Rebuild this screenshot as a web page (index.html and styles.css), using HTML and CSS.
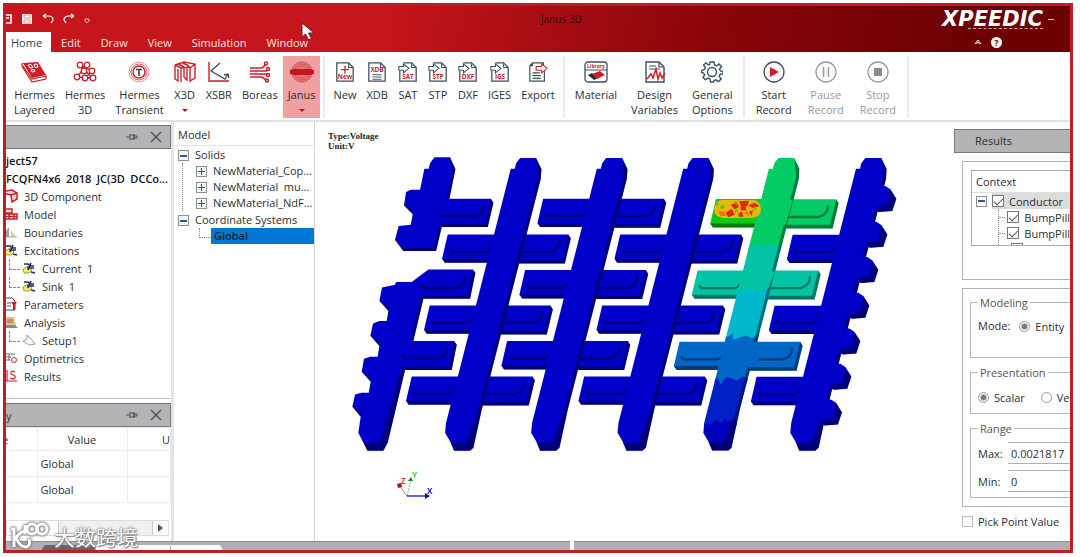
FILE: index.html
```html
<!DOCTYPE html>
<html lang="en">
<head>
    <meta charset="utf-8">
    <meta name="viewport" content="width=device-width, initial-scale=1.0">
    <title>Janus 3D</title>
    <link rel="stylesheet" href="styles.css">
</head>
<body>
    <!-- shared shapes -->
    <svg class="defs" width="0" height="0" aria-hidden="true">
        <defs>
            <symbol id="file" viewBox="0 0 22 22">
                <path d="M2 1h13l5 5v15H2z" fill="#fff" stroke="#3c4f5e" stroke-width="1.4"/>
                <path d="M15 1v5h5" fill="none" stroke="#3c4f5e" stroke-width="1.2"/>
            </symbol>
            <symbol id="import" viewBox="0 0 22 22">
                <path d="M6 1h9l5 5v15H2V10" fill="#fff" stroke="#3c4f5e" stroke-width="1.4"/>
                <path d="M15 1v5h5" fill="none" stroke="#3c4f5e" stroke-width="1.2"/>
                <path d="M1 5h5V2l6 5-6 5V9H1z" fill="#fff" stroke="#3c4f5e" stroke-width="1.2"/>
            </symbol>
            <symbol id="pin" viewBox="0 0 12 8">
                <path d="M0 4h4M4 1v6M4 2h4v4H4M8 1v6M8 3h3v2H8" fill="none" stroke="#45525c"/>
            </symbol>
            <symbol id="close" viewBox="0 0 12 12">
                <path d="M1 1l10 10M11 1L1 11" stroke="#45525c" stroke-width="1.4"/>
            </symbol>
            <symbol id="source" viewBox="0 0 14 12">
                <path d="M1 7l5-3 4 4-3 3H2z" fill="#f3ea6a" stroke="#77722c" stroke-width=".7"/>
                <path d="M2 2h4l2 2h4M5 6h7M9 1L6 8M9 10l4 1" fill="none" stroke="#222b6e" stroke-width="1.6"/>
            </symbol>

            <!-- one spine of the lead frame -->
            <g id="spine">
                <path d="M540 36H588L604 70L602 98L425 790L400 905L390 914H342L330 885L315 860L318 830L512 68H524L528 52Z"/>
                <path class="shade" d="M588 36L604 70L602 98L425 790L400 905L390 914H342L332 890H378L390 860L415 790L594 90Z"/>
            </g>
            <g id="finger-left">
                <path d="M323 265H480L456 350H314L306 338Z"/>
                <path class="shade" d="M306 338H458L456 350H314Z"/>
                <path class="groove" d="M328 310L334 318H436Q460 310 459 283"/>
            </g>
            <g id="finger-right">
                <path d="M520 265H685L692 277L674 352H510Z"/>
                <path class="shade" d="M685 265L692 277L674 352H518L522 341H666Z"/>
                <path class="groove" d="M528 308L538 318H632Q662 310 660 283"/>
            </g>
            <g id="bump">
                <path d="M1596 120H1635L1650 130L1668 158L1656 195L1616 198L1580 182Z"/>
                <path class="shade" d="M1650 130L1668 158L1656 195L1616 198L1602 184L1642 176Z"/>
            </g>
            <clipPath id="hot-spine">
                <path d="M1314 36H1362L1378 70L1376 98L1199 790L1174 905L1164 914H1116L1104 885L1089 860L1092 830L1286 68H1298L1302 52Z"/>
            </clipPath>
        </defs>
    </svg>

    <div class="app">
        <header class="titlebar">
            <div class="title-row">
                <div class="quick-access">
                    <svg width="6" height="10" viewBox="0 0 6 10"><path d="M0 1h5v8H0M0 4h3" fill="none" stroke="#fff" stroke-width="1.6"/></svg>
                    <svg width="12" height="12" viewBox="0 0 12 12"><path d="M1 1h9l1 1v9H1z" fill="#fff"/><path d="M3 2h6v3H3zM3 7h6v3H3z" fill="none" stroke="#e58a8d"/></svg>
                    <svg width="12" height="12" viewBox="0 0 12 12"><path d="M1 3l3-2M1 3l3 2M1 3h5q5 0 5 4l-2 3" fill="none" stroke="#fff" stroke-width="1.2"/></svg>
                    <svg width="12" height="12" viewBox="0 0 12 12"><path d="M11 3L8 1M11 3L8 5M11 3H6Q1 3 1 7l2 3" fill="none" stroke="#fff" stroke-width="1.2"/></svg>
                    <svg class="qa-more" width="6" height="6" viewBox="0 0 6 6"><path d="M1 1h4v2L3 5 1 3z" fill="none" stroke="#eebbbd"/></svg>
                </div>
                <span class="app-title">Janus 3D</span>
                <div class="brand">
                    <div class="brand-name">XPEEDIC</div>
                    <div class="brand-line"></div>
                </div>
                <span class="minimize"></span>
            </div>
            <div class="tab-row">
                <nav class="tabs">
                    <button class="tab active">Home</button>
                    <button class="tab">Edit</button>
                    <button class="tab">Draw</button>
                    <button class="tab">View</button>
                    <button class="tab">Simulation</button>
                    <button class="tab">Window</button>
                </nav>
                <div class="help">
                    <svg width="8" height="8" viewBox="0 0 8 8"><path d="M1 6l3-4 3 4M2.500 6L4 4l1.500 2" fill="none" stroke="#fff"/></svg>
                    <span class="help-badge">?</span>
                </div>
            </div>
        </header>

        <div class="ribbon">
            <div class="group">
                <button class="tool">
                    <svg width="26" height="22" viewBox="0 0 26 22"><path d="M2 2l15-1 8 13-14 3z" fill="#cb2027"/><path d="M2 2q-2 2 0 5l9 14 14-3v-4M2 5l9 13 14-3" fill="none" stroke="#cb2027" stroke-width="1.200"/><path d="M7 4l3-.5 2 3-3 .5zM13 3.500l3-.5 1 3-3 .5zM10 9l3-.5 1 2-3 .5z" fill="none" stroke="#fff"/></svg>
                    <span>Hermes<br>Layered</span>
                </button>
                <button class="tool">
                    <svg width="24" height="22" viewBox="0 0 24 22"><g fill="#fff" stroke="#cb2027" stroke-width="1.300"><path d="M7 4l12 6M4 16L14 4M4 16l17 1M8 5l11 12M12 17l7-7"/><circle cx="7" cy="4" r="2.800"/><circle cx="14" cy="4" r="2.800"/><circle cx="19" cy="10" r="2.800"/><circle cx="11" cy="10" r="2.800"/><circle cx="4" cy="16" r="2.800"/><circle cx="12" cy="17" r="2.800"/><circle cx="20" cy="17" r="2.800"/></g></svg>
                    <span>Hermes<br>3D</span>
                </button>
                <button class="tool">
                    <svg width="22" height="22" viewBox="0 0 22 22"><g fill="none" stroke="#cb2027"><circle cx="11" cy="11" r="10" stroke-opacity=".5"/><circle cx="11" cy="11" r="8" stroke-opacity=".7"/><circle cx="11" cy="11" r="6" stroke-width="1.500"/></g><path d="M8 8.500h6M11 8.500V15" stroke="#2c3e4c" stroke-width="1.600"/></svg>
                    <span>Hermes<br>Transient</span>
                </button>
                <button class="tool">
                    <svg width="22" height="22" viewBox="0 0 22 22"><g fill="none" stroke="#cb2027" stroke-width="1.400"><path d="M1 4l9-3 11 2v14l-5 3V7l5-4M1 4l6 3 9-1M1 4v14l3 2V8M7 7v14M10 7v9l3 3V7M4 3l6 3M9 2l6 3"/></g></svg>
                    <span>X3D</span>
                    <i class="drop"></i>
                </button>
                <button class="tool">
                    <svg width="22" height="22" viewBox="0 0 22 22"><path d="M1 1v19h20" fill="none" stroke="#cb2027" stroke-width="1.400"/><path d="M12 2L3 10l14 8 3-5M16 14l4-1 1 4" fill="none" stroke="#3c4f5e" stroke-width="1.300"/></svg>
                    <span>XSBR</span>
                </button>
                <button class="tool">
                    <svg width="22" height="22" viewBox="0 0 22 22"><g fill="none" stroke="#cb2027" stroke-width="1.500"><path d="M1 7h11q3 0 4-4M1 10h17M1 13h17M1 16h10q4 0 6 4"/><circle cx="17" cy="2.500" r="1.500"/><circle cx="19" cy="8" r="1.500"/><circle cx="19" cy="14" r="1.500"/><circle cx="18" cy="19.500" r="1.500"/></g></svg>
                    <span>Boreas</span>
                </button>
                <button class="tool selected">
                    <svg width="24" height="22" viewBox="0 0 24 22"><circle cx="12" cy="11" r="10.500" fill="#e5787b"/><g fill="none" stroke="#cb4b50" stroke-width=".8"><circle cx="12" cy="11" r="10"/><circle cx="12" cy="11" r="8"/><circle cx="12" cy="11" r="6"/></g><path d="M0 9l4-1h16l4 1v4l-4 1H4l-4-1z" fill="#c4161c"/></svg>
                    <span>Janus</span>
                    <i class="drop"></i>
                </button>
            </div>
            <div class="group">
                <button class="tool">
                    <svg width="20" height="22" viewBox="0 0 22 22"><use href="#file"/><path d="M11 4v9M6.500 8.500h9" stroke="#cb2027" stroke-width="1.400"/><text x="11" y="19" class="tag">New</text></svg>
                    <span>New</span>
                </button>
                <button class="tool">
                    <svg width="20" height="22" viewBox="0 0 22 22"><use href="#file"/><text x="11" y="11" class="tag">XDB</text><path d="M6 14h10M6 16.500h10M6 19h10" stroke="#3c4f5e"/></svg>
                    <span>XDB</span>
                </button>
                <button class="tool">
                    <svg width="20" height="22" viewBox="0 0 22 22"><use href="#import"/><text x="11" y="19" class="tag">SAT</text></svg>
                    <span>SAT</span>
                </button>
                <button class="tool">
                    <svg width="20" height="22" viewBox="0 0 22 22"><use href="#import"/><text x="11" y="19" class="tag">STP</text></svg>
                    <span>STP</span>
                </button>
                <button class="tool">
                    <svg width="20" height="22" viewBox="0 0 22 22"><use href="#import"/><text x="11" y="19" class="tag">DXF</text></svg>
                    <span>DXF</span>
                </button>
                <button class="tool">
                    <svg width="20" height="22" viewBox="0 0 22 22"><use href="#import"/><text x="11" y="19" class="tag">IGS</text></svg>
                    <span>IGES</span>
                </button>
                <button class="tool">
                    <svg width="20" height="22" viewBox="0 0 22 22"><path d="M18 10v11H2V4l3-3h12v3M5 1v3H2M5 12h8M5 15h9M5 18h9" fill="none" stroke="#3c4f5e" stroke-width="1.300"/><path d="M9 5h6V2l6 5-6 5V9H9z" fill="#fff" stroke="#cb2027" stroke-width="1.200"/></svg>
                    <span>Export</span>
                </button>
            </div>
            <div class="group wide">
                <button class="tool">
                    <svg width="24" height="22" viewBox="0 0 24 22"><rect x="1" y="1" width="22" height="20" rx="3" fill="#fff" stroke="#3c4f5e" stroke-width="1.300"/><text x="12" y="7" class="tag small">Library</text><path d="M1 9h22" stroke="#3c4f5e"/><path d="M4 14l4-2 6 5-4 2z" fill="#1d2b38"/><path d="M8 13l8-3 5 4-8 4z" fill="#cb2027"/></svg>
                    <span>Material</span>
                </button>
                <button class="tool">
                    <svg width="22" height="22" viewBox="0 0 22 22"><use href="#file"/><path d="M5 5h7M5 8h11" stroke="#3c4f5e"/><path d="M3 18l4-5 2 4 3-9 2 10 2-6 2 5 3-5" fill="none" stroke="#cb2027" stroke-width="1.500"/></svg>
                    <span>Design<br>Variables</span>
                </button>
                <button class="tool">
                    <svg width="22" height="22" viewBox="0 0 22 22"><path d="M9 1h4l.5 3 2 1 2.500-2 2.500 2.500-2 2.500 1 2 2.500.5v2l-3 1-.8 2 2 2.500-2.600 2.600-2.600-1.800-2 .8L12.500 21h-3L9 18l-2-1-2.500 1.800L2 16.500 3.600 14l-1-2L.5 11.500v-2l3-1 1-2L2.500 4 5 2l2.500 2 1.200-.5z" fill="none" stroke="#3c4f5e" stroke-width="1.400"/><circle cx="11" cy="11" r="4.500" fill="none" stroke="#3c4f5e" stroke-width="1.400"/></svg>
                    <span>General<br>Options</span>
                </button>
            </div>
            <div class="group record">
                <button class="tool">
                    <svg width="22" height="22" viewBox="0 0 22 22"><circle cx="11" cy="11" r="10" fill="none" stroke="#3c4f5e" stroke-width="1.300"/><path d="M7 6l9 5-9 5z" fill="#cb2027"/></svg>
                    <span>Start<br>Record</span>
                </button>
                <button class="tool" disabled>
                    <svg width="22" height="22" viewBox="0 0 22 22"><circle cx="11" cy="11" r="10" fill="none" stroke="#999" stroke-width="1.300"/><path d="M8.500 6v10M13.500 6v10" stroke="#999" stroke-width="1.500"/></svg>
                    <span>Pause<br>Record</span>
                </button>
                <button class="tool" disabled>
                    <svg width="22" height="22" viewBox="0 0 22 22"><circle cx="11" cy="11" r="10" fill="none" stroke="#999" stroke-width="1.300"/><path d="M7 7h8v8H7z" fill="#8d8d8d"/></svg>
                    <span>Stop<br>Record</span>
                </button>
            </div>
        </div>

        <main class="workspace">
            <div class="left">
                <section class="project">
                    <div class="panel-title">
                        <svg width="12" height="8"><use href="#pin"/></svg>
                        <svg width="12" height="12"><use href="#close"/></svg>
                    </div>
                    <ul class="project-tree">
                        <li class="bold">ject57</li>
                        <li class="bold">FCQFN4x6&ensp;2018&ensp;JC(3D&ensp;DCCo...</li>
                        <li><svg width="12" height="14" viewBox="0 0 12 14"><path d="M0 2l6-1 5 3v6l-5 3-1-7-5-1M5 6l6-2" fill="#f6d5d6" stroke="#cb2027" stroke-width="1.500"/></svg>3D Component</li>
                        <li><svg width="12" height="14" viewBox="0 0 12 14"><path d="M0 2h6v4H0M0 7h11v5H0M3 7v5M8 7v5M0 9.500h11" fill="none" stroke="#cb2027" stroke-width="1.500"/></svg>Model</li>
                        <li><svg width="12" height="14" viewBox="0 0 12 14"><path d="M0 12V6l3-4v10z" fill="#8ba5b8"/><path d="M5 12V5l5 7z" fill="#e6c98a"/><path d="M0 12h11" stroke="#9aa"/></svg>Boundaries</li>
                        <li><svg width="12" height="12" viewBox="2 0 12 12"><use href="#source" width="14" height="12"/></svg>Excitations</li>
                        <li class="branch"><svg width="14" height="12"><use href="#source"/></svg>Current&ensp;1</li>
                        <li class="branch"><svg width="14" height="12"><use href="#source"/></svg>Sink&ensp;1</li>
                        <li><svg width="12" height="14" viewBox="0 0 12 14"><path d="M0 1h6l3 3v9H0M1 6h4M1 9h4" fill="none" stroke="#3c4f5e"/><path d="M5 5h6l-2 3v5H7V8z" fill="#cb2027"/></svg>Parameters</li>
                        <li><svg width="12" height="14" viewBox="0 0 12 14"><path d="M0 2h8l2 8H0z" fill="#e9bf7c"/><path d="M1 5h6M1 7h6" stroke="#7a6a50"/><path d="M0 10h9l3 3H0z" fill="#6f8fa8"/></svg>Analysis</li>
                        <li class="branch"><svg width="14" height="12" viewBox="0 0 14 12"><path d="M1 7l4-2V1l5 5 3 4-6 1z" fill="#fafafa" stroke="#999"/></svg>Setup1</li>
                        <li><svg width="12" height="14" viewBox="0 0 12 14"><path d="M0 3h9M0 6h5M0 9h4M3 3v6" stroke="#5d6b76"/><circle cx="8" cy="9" r="2.500" fill="none" stroke="#cb2027"/></svg>Optimetrics</li>
                        <li><svg width="12" height="14" viewBox="0 0 12 14"><path d="M1 1v11M0 12h11M9 3L7 2 5 3v2l4 2v2L7 10 4 9" fill="none" stroke="#cb2027" stroke-width="1.200"/></svg>Results</li>
                    </ul>
                </section>
                <section class="property">
                    <div class="panel-title">
                        <span class="name">y</span>
                        <svg width="12" height="8"><use href="#pin"/></svg>
                        <svg width="12" height="12"><use href="#close"/></svg>
                    </div>
                    <table>
                        <tr><th>e</th><th>Value</th><th>U</th></tr>
                        <tr><td></td><td>Global</td><td></td></tr>
                        <tr><td></td><td>Global</td><td></td></tr>
                    </table>
                    <div class="hscroll">
                        <span class="thumb"></span>
                        <button aria-label="Scroll right"><svg width="5" height="8" viewBox="0 0 5 8"><path d="M0 0l5 4-5 4z" fill="#555"/></svg></button>
                    </div>
                </section>
            </div>

            <section class="model-tree">
                <h2>Model</h2>
                <ul>
                    <li><i class="box minus"></i>Solids
                        <ul class="solids">
                            <li><i class="box plus"></i>NewMaterial_Cop...</li>
                            <li><i class="box plus"></i>NewMaterial&ensp;mu...</li>
                            <li><i class="box plus"></i>NewMaterial_NdF...</li>
                        </ul>
                    </li>
                    <li><i class="box minus"></i>Coordinate Systems
                        <ul class="coords">
                            <li><span class="picked">Global</span></li>
                        </ul>
                    </li>
                </ul>
            </section>

            <section class="viewport">
                <p class="legend">Type:Voltage<br>Unit:V</p>
                <svg class="part" viewBox="0 0 1700 930" fill="#0000c8">
                    <!-- left edge bar, upper and lower pieces -->
                    <path d="M283 34H330L346 70L328 158H452L460 170L443 243H305L288 315H190L165 280L176 240L212 236L218 205L192 178L198 138L212 131H240L253 68H266L270 52Z"/>
                    <path class="shade" d="M330 34L346 70L328 158H319L338 80ZM452 158L460 170L443 243H305L288 315H190L182 306H280L298 234H436ZM192 170L220 196L218 205L192 180ZM165 278L190 306V315L165 284Z"/>
                    <path class="groove" d="M297 202L305 210H405Q433 202 431 176"/>
                    <path d="M265 370H398L406 380L390 458H250L220 585H342L350 596L335 672H195L143 890L130 914H82L55 860L62 812L37 782L45 745L64 740H86L92 707L65 677L72 638L90 632H113L118 600L91 569L99 532L118 525H140L145 495L118 464L126 424L165 416L168 408H215Z"/>
                    <path class="shade" d="M398 370L406 380L390 458H250L220 585H211L242 448H382ZM342 585L350 596L335 672H195L143 890L130 914H82L72 890H120L186 662H328ZM118 462L148 486L145 495ZM91 567L121 591L118 600ZM65 675L95 698L92 707ZM37 780L65 803L62 812Z"/>
                    <path class="groove" d="M241 417L249 425H350Q378 417 376 390M188 630L196 638H295Q323 630 321 603"/>

                    <!-- six rows of fingers, then the spines they hang on -->
                    <use href="#finger-left"/>
                    <use href="#finger-left" x="-54" y="213"/>
                    <use href="#finger-left" x="-108" y="426"/>
                    <use href="#finger-right"/>
                    <use href="#finger-right" x="-54" y="213"/>
                    <use href="#finger-right" x="-108" y="426"/>
                    <use href="#spine"/>

                    <use href="#finger-left" x="286" y="-107"/>
                    <use href="#finger-left" x="232" y="107"/>
                    <use href="#finger-left" x="178" y="320"/>
                    <use href="#finger-right" x="286" y="-107"/>
                    <use href="#finger-right" x="232" y="107"/>
                    <use href="#finger-right" x="178" y="320"/>
                    <use href="#spine" x="258"/>

                    <use href="#finger-left" x="517"/>
                    <use href="#finger-left" x="463" y="213"/>
                    <use href="#finger-left" x="409" y="426"/>
                    <use href="#finger-right" x="517"/>
                    <use href="#finger-right" x="463" y="213"/>
                    <use href="#finger-right" x="409" y="426"/>
                    <use href="#spine" x="517"/>

                    <!-- spine carrying the voltage -->
                    <use href="#finger-left" x="804" y="-106" fill="#10c818"/>
                    <use href="#finger-right" x="803" y="-105" fill="#04cc64"/>
                    <use href="#finger-left" x="749" y="108" fill="#00c4a4"/>
                    <use href="#finger-right" x="749" y="108" fill="#00c4a4"/>
                    <use href="#finger-left" x="695" y="322" fill="#0066c8"/>
                    <use href="#finger-right" x="695" y="322" fill="#0066c8"/>
                    <g clip-path="url(#hot-spine)">
                        <path fill="#04cc64" d="M1080 30H1400V320H1080Z"/>
                        <path fill="#00c4a4" d="M1080 300H1236L1256 290L1270 302L1288 292L1308 300H1400V450H1080Z"/>
                        <path fill="#00b8cc" d="M1080 440L1200 438L1220 430L1256 434L1285 428H1400V600H1080Z"/>
                        <path fill="#0066c8" d="M1080 570L1164 572L1180 560L1178 582L1216 568L1234 576L1262 560L1280 572H1400V710H1080Z"/>
                        <path fill="#0022c4" d="M1080 706L1132 696L1142 712L1160 692L1190 702L1208 690L1226 700H1400V840H1080Z"/>
                        <path fill="#0000bc" d="M1080 830L1110 836L1128 820L1142 832L1160 812L1158 826L1182 820L1190 832H1400V930H1080Z"/>
                        <path class="shade" d="M1362 36L1378 70L1376 98L1199 790L1174 905L1164 914H1116L1106 890H1152L1164 860L1189 790L1368 90Z"/>
                    </g>
                    <path fill="#0066c8" d="M1215 588H1270L1248 662H1205Z"/>
                    <path fill="#04cc64" d="M1260 162H1358L1336 236H1250Z"/>
                    <path fill="#00c4a4" d="M1250 376H1304L1284 428H1240Z"/>
                    <g>
                        <rect x="1122" y="162" width="140" height="54" rx="25" fill="#e4b80c"/>
                        <path fill="#dd2a0c" d="M1172 176l18-6 6 14-14 6zM1196 166l30-2-4 16-18 4zM1200 184l16-4 2 14-16-2zM1224 178l20-8 14 10-20 6zM1156 200l18-12 10 18-20 8zM1194 204l10-8 6 16h-14zM1226 198l12-6-4 18z"/>
                        <path fill="#e8731a" d="M1134 194l20 4 4 12-18 0zM1180 168l12-2-2 10zM1210 202l12-6 6 14z"/>
                        <path fill="#5cc41c" d="M1138 182l12-6 6 8-12 6zM1122 176l14-8-4 12zM1182 192l8-4 4 8-8 4zM1236 188l14-2-4 8z"/>
                    </g>

                    <!-- right edge bar -->
                    <use href="#finger-left" x="1034" y="1"/>
                    <use href="#finger-left" x="980" y="214"/>
                    <use href="#finger-left" x="926" y="427"/>
                    <use href="#spine" x="1035"/>
                    <use href="#bump"/>
                    <use href="#bump" x="-27" y="107"/>
                    <use href="#bump" x="-54" y="213"/>
                    <use href="#bump" x="-81" y="320"/>
                    <use href="#bump" x="-108" y="427"/>
                    <use href="#bump" x="-135" y="533"/>
                    <use href="#bump" x="-163" y="640"/>
                </svg>
                <svg class="axes" width="40" height="28" viewBox="0 0 40 28">
                    <path d="M12 25L4 14" stroke="#f08080"/>
                    <path d="M12 25L16 9" stroke="#50d050" stroke-dasharray="2 1"/>
                    <path d="M12 25H32" stroke="#3030d0" stroke-width="1.500"/>
                    <path d="M2 13l4-1 1 4-4 1z" fill="#b01010"/>
                    <path d="M13 10l3-4 2 4z" fill="#108020"/>
                    <path d="M30 22l5 3-5 3z" fill="#1010a0"/>
                    <text x="6" y="13" fill="#e04040">Z</text>
                    <text x="17" y="7" fill="#30d030">Y</text>
                    <text x="32" y="23" fill="#2020d0">X</text>
                </svg>
            </section>

            <section class="results">
                <h2>Results</h2>
                <div class="context-box">
                    <div class="context">
                        <div class="context-head">Context</div>
                        <div class="node"><i class="box minus"></i><label class="on"><input type="checkbox" checked>Conductor</label></div>
                        <div class="kids">
                            <label><input type="checkbox" checked>BumpPill</label>
                            <label><input type="checkbox" checked>BumpPill</label>
                            <label><input type="checkbox"></label>
                        </div>
                    </div>
                </div>
                <div class="settings">
                    <fieldset class="modeling">
                        <legend>Modeling</legend>
                        <div class="line"><span>Mode:</span><label><input type="radio" name="mode" checked>Entity</label></div>
                    </fieldset>
                    <fieldset class="presentation">
                        <legend>Presentation</legend>
                        <div class="line"><label><input type="radio" name="kind" checked>Scalar</label><label><input type="radio" name="kind">Vec</label></div>
                    </fieldset>
                    <fieldset class="range">
                        <legend>Range</legend>
                        <div class="field"><label for="max">Max:</label><input id="max" type="text" value="0.0021817"></div>
                        <div class="field"><label for="min">Min:</label><input id="min" type="text" value="0"></div>
                    </fieldset>
                </div>
                <label class="pick"><input type="checkbox">Pick Point Value</label>
            </section>
        </main>

        <footer class="docks">
            <div class="dock"><span class="dock-tab dark"></span><span class="dock-tab"></span><span class="dock-tab end"></span></div>
            <div class="dock"></div>
        </footer>

        <svg class="cursor" width="14" height="20" viewBox="0 0 14 20"><path d="M1 1v14l3.500-3 3 6 3-1.500-3-5.500H13z" fill="#fff" stroke="#6b1a1c"/></svg>
        <div class="watermark">
            <svg width="42" height="28" viewBox="0 0 42 28"><g id="mark" fill="none"><path d="M3 7h3v18M20 8q-8 1-12 8 4 9 10 9 5-1 3-8"/><path d="M17 3v9"/><circle cx="24" cy="7" r="5"/><circle cx="34" cy="7" r="5"/></g></svg>
            <span lang="zh">大数跨境</span>
        </div>
    </div>
</body>
</html>
```

FILE: styles.css
```css
* {
    box-sizing: border-box;
}

body {
    margin: 0;
    padding: 3px 7px 4px 3px;
    height: 100vh;
    background: #fff;
    color: #2b2f33;
    font-family: "Open Sans", "Noto Sans", sans-serif;
    font-size: 11px;
    line-height: 15px;
}

ul {
    list-style: none;
    margin: 0;
    padding: 0;
}

h2 {
    margin: 0;
    font-size: 11px;
    font-weight: normal;
}

button {
    border: 0;
    background: none;
    font: inherit;
    color: inherit;
}

svg {
    display: block;
    flex: none;
}

.defs {
    position: absolute;
}

.app {
    position: relative;
    display: flex;
    flex-direction: column;
    height: 100%;
    border: 3px solid #be1e23;
    overflow: hidden;
}

/* title bar */
.titlebar {
    flex: none;
    background: linear-gradient(100deg, #c6151c 35%, #8a0509 66%, #6c0003 90%);
    color: #fff;
}

.title-row {
    display: flex;
    align-items: center;
    height: 26px;
    padding-right: 16px;
}

.quick-access {
    display: flex;
    align-items: center;
    gap: 9px;
    flex: 4;
}

.qa-more {
    margin-top: 4px;
}

.app-title {
    flex: 3;
    color: #3a0507;
    font-size: 10px;
}

.brand-name {
    font-family: "DejaVu Sans", sans-serif;
    font-size: 21px;
    font-weight: bold;
    font-style: italic;
    line-height: 18px;
}

.brand-line {
    margin-left: 26px;
    border-top: 1px dashed #d9a0a2;
}

.minimize {
    width: 6px;
    margin-left: 5px;
    border-top: 1px solid #ddd;
}

.tab-row {
    display: flex;
    justify-content: space-between;
    height: 20px;
    padding-right: 68px;
}

.tabs {
    display: flex;
}

.tab {
    padding: 0 10px;
    color: #fbe9e9;
}

.tab.active {
    padding: 0 9px 0 5px;
    background: #fff;
    color: #2c3e50;
}

.help {
    display: flex;
    align-items: center;
    gap: 9px;
}

.help-badge {
    width: 11px;
    height: 11px;
    border-radius: 50%;
    background: #fff;
    color: #6c0003;
    font-size: 9px;
    font-weight: bold;
    line-height: 11px;
    text-align: center;
}

/* ribbon */
.ribbon {
    display: flex;
    flex: none;
    height: 70px;
    padding: 4px 0 2px;
    border-bottom: 2px solid #e2e2e2;
}

.group {
    display: flex;
    padding: 0 3px;
    border-right: 2px solid #ebebeb;
}

.tool {
    display: flex;
    flex-direction: column;
    align-items: center;
    padding: 5px 5px 0;
}

.tool span {
    margin-top: 4px;
}

.tool:disabled {
    color: #999;
}

.tool.selected {
    background: #f0a0a2;
}

.wide .tool {
    padding: 5px 7px 0;
}

.record .tool {
    padding: 5px 8px 0;
}

.drop {
    margin-top: 7px;
    border: 3px solid transparent;
    border-top-color: #b3161b;
    border-bottom: 0;
}

.tag {
    fill: #cb2027;
    font-size: 7px;
    font-weight: bold;
    text-anchor: middle;
}

.tag.small {
    font-size: 5px;
}

/* workspace */
.workspace {
    display: flex;
    flex: 1;
    min-height: 0;
}

.left {
    display: flex;
    flex-direction: column;
    flex: none;
    width: 168px;
    padding-top: 3px;
    border-right: 3px solid #e4e4e6;
}

.panel-title {
    display: flex;
    align-items: center;
    justify-content: flex-end;
    gap: 12px;
    height: 24px;
    padding-right: 8px;
    border: 1px solid #77777a;
    border-left: 0;
    background: #b4b4b6;
}

.panel-title .name {
    flex: 1;
    color: #2c3e50;
}

.project {
    height: 274px;
    border-bottom: 1px solid #c4c4c6;
}

.project-tree {
    padding-top: 2px;
}

.project-tree li {
    display: flex;
    align-items: center;
    gap: 6px;
    height: 18px;
    white-space: nowrap;
}

.project-tree .bold {
    font-weight: 600;
    color: #111;
}

.project-tree .branch {
    position: relative;
    padding-left: 16px;
}

.branch::before {
    content: "";
    position: absolute;
    left: 3px;
    top: 0;
    width: 10px;
    height: 10px;
    border-left: 1px dashed #888;
    border-bottom: 1px dashed #888;
}

.property {
    display: flex;
    flex-direction: column;
    flex: 1;
    margin-top: 4px;
}

.property table {
    width: 100%;
    table-layout: fixed;
    border-collapse: collapse;
}

.property tr {
    height: 26px;
}

.property tr:first-child {
    height: 23px;
}

.property th,
.property td {
    padding: 0 3px;
    border: 1px solid #ececee;
    border-left: 0;
    font-weight: normal;
    text-align: left;
}

.property th:nth-child(1) {
    width: 31px;
    padding: 0;
    text-indent: -4px;
}

.property th:nth-child(2) {
    width: 90px;
    text-align: center;
}

.property th:nth-child(3) {
    padding: 0;
    text-align: right;
}

.hscroll {
    display: flex;
    justify-content: space-between;
    height: 16px;
    margin: auto 2px 5px 0;
    border: 1px solid #ddd;
    background: #f0f0f0;
}

.thumb {
    width: 52px;
    border-right: 1px solid #ccc;
    background: #fff;
}

.hscroll button {
    padding: 0 5px;
    border-left: 1px solid #ccc;
    background: #fafafa;
}

/* model tree */
.model-tree {
    flex: none;
    width: 141px;
    padding-top: 2px;
    border-right: 1px solid #d8d8d8;
    overflow: hidden;
}

.model-tree h2 {
    height: 22px;
    padding-left: 4px;
    border-bottom: 1px solid #e4e4e4;
    line-height: 22px;
}

.model-tree li {
    line-height: 17px;
    white-space: nowrap;
}

.model-tree > ul > li {
    padding-left: 4px;
}

.box {
    display: inline-block;
    flex: none;
    width: 11px;
    height: 11px;
    margin-right: 6px;
    border: 1px solid #8f8f8f;
    vertical-align: -2px;
    background: linear-gradient(#2f54a8, #2f54a8) center / 7px 2px no-repeat #f4f6fa;
}

.box.plus {
    background: linear-gradient(#2f54a8, #2f54a8) center / 7px 1px no-repeat, linear-gradient(#2f54a8, #2f54a8) center / 1px 7px no-repeat, #f4f6fa;
}

.solids {
    margin-left: 4px;
    padding-left: 13px;
    border-left: 1px dotted #888;
}

.solids li {
    line-height: 16px;
}

.coords {
    margin-left: 21px;
}

.coords li {
    display: flex;
    height: 16px;
    line-height: 16px;
}

.coords li::before {
    content: "";
    width: 11px;
    height: 9px;
    border-left: 1px dotted #888;
    border-bottom: 1px dotted #888;
}

.picked {
    flex: 1;
    padding-left: 3px;
    background: #0078d7;
    color: #101c28;
    font-weight: 600;
}

/* viewport */
.viewport {
    flex: 1;
    min-width: 0;
    padding: 9px 0 0 13px;
}

.legend {
    margin: 0;
    font: bold 9px/10px "Liberation Serif", serif;
    color: #222;
}

.part {
    width: 567px;
    max-width: 100%;
    margin: -5px 0 0 12px;
}

.shade {
    fill: #000;
    fill-opacity: .4;
}

.groove {
    fill: none;
    stroke: #000;
    stroke-opacity: .4;
    stroke-width: 7px;
}

.axes {
    margin: 15px 0 0 67px;
}

.axes text {
    font-size: 8px;
    font-weight: bold;
}

/* results */
.results {
    flex: none;
    width: 116px;
    padding-top: 7px;
    overflow: hidden;
    white-space: nowrap;
}

.results h2 {
    height: 24px;
    padding-left: 20px;
    border: 1px solid #77777a;
    border-right: 0;
    background: #b4b4b6;
    line-height: 22px;
}

.context-box,
.settings {
    margin: 8px 0 0 8px;
    padding: 8px 0 0 8px;
    border: 1px solid #b2b2b2;
    border-right: 0;
}

.context-box {
    height: 119px;
}

.context {
    height: 76px;
    border: 1px solid #a8a8a8;
    border-right: 0;
    overflow: hidden;
}

.context-head {
    padding-left: 4px;
    border-bottom: 1px solid #e0e0e0;
    line-height: 21px;
}

.node {
    display: flex;
    align-items: center;
    padding-left: 4px;
}

.node .box {
    margin-right: 5px;
}

.node .on {
    flex: 1;
    background: #dcdcdc;
}

.results label {
    display: flex;
    align-items: center;
    gap: 5px;
    height: 16px;
}

.results input[type="checkbox"],
.results input[type="radio"] {
    appearance: none;
    flex: none;
    width: 12px;
    height: 12px;
    margin: 0;
    border: 1px solid #777;
    background: #fff;
}

.results input[type="checkbox"]:checked::before {
    content: "";
    display: block;
    width: 8px;
    height: 4px;
    margin: 2px 1px;
    border: solid #555;
    border-width: 0 0 1px 1px;
    transform: rotate(-45deg);
}

.results input[type="radio"] {
    width: 11px;
    height: 11px;
    border-color: #999;
    border-radius: 50%;
}

.results input[type="radio"]:checked {
    background: radial-gradient(#777 2px, #fff 4px);
}

.kids {
    margin-left: 26px;
    border-left: 1px dotted #888;
}

.kids label::before {
    content: "";
    width: 10px;
    margin-right: -3px;
    border-top: 1px dotted #888;
}

.settings {
    height: 219px;
    padding: 6px 0 0 7px;
}

fieldset {
    margin: 0 0 7px;
    padding: 0 0 0 7px;
    border: 1px solid #b8b8b8;
    border-right: 0;
}

legend {
    padding: 0 2px;
    color: #555;
}

.modeling {
    height: 63px;
}

.presentation {
    height: 49px;
}

.range {
    height: 77px;
}

.line {
    display: flex;
    gap: 9px;
    padding-top: 8px;
}

.presentation .line {
    gap: 16px;
    padding-top: 9px;
}

.field {
    display: flex;
    align-items: center;
    margin-top: 6px;
}

.field label {
    width: 30px;
}

.field input {
    width: 90px;
    height: 22px;
    padding: 0 3px;
    border: 1px solid #b0b0b0;
    border-width: 1px 0;
    font: inherit;
    color: inherit;
}

.results .pick {
    margin: 6px 0 0 8px;
}

.pick input[type="checkbox"] {
    width: 11px;
    height: 11px;
    border-color: #bbb;
}

/* bottom docks */
.docks {
    display: flex;
    gap: 4px;
    flex: none;
    height: 9px;
}

.dock {
    display: flex;
    align-items: flex-end;
    flex: 1;
    border-top: 1px solid #8e8e90;
    background: #b0b0b2;
}

.dock:first-child {
    flex: none;
    width: 53%;
    padding-left: 36px;
}

.dock-tab {
    width: 75px;
    height: 5px;
    border-right: 1px solid #bbb;
    background: #fff;
}

.dock-tab.dark {
    width: 54px;
    border-radius: 5px 0 0 0;
    background: #666;
}

.dock-tab.end {
    width: 52px;
    border-radius: 0 5px 0 0;
}

/* things lying over the window */
.cursor {
    position: absolute;
    left: 295px;
    top: 16px;
}

.watermark {
    position: absolute;
    left: 2px;
    bottom: 0;
    display: flex;
    align-items: center;
    gap: 4px;
    color: #fff;
    font: 400 21px/28px "Noto Sans CJK SC", sans-serif;
    text-shadow: 0 0 2px #777, 0 0 2px #777, 1px 1px 1px #888;
}

.watermark svg {
    stroke: #fff;
    stroke-width: 3px;
    filter: drop-shadow(0 0 1px #777) drop-shadow(0 0 1px #777);
}
```
